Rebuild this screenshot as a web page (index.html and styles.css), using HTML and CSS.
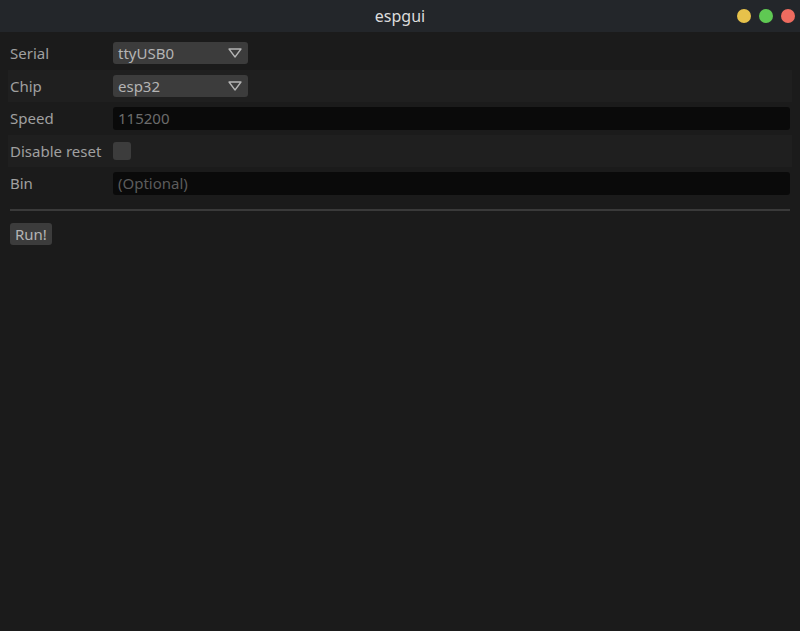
FILE: index.html
```html
<!DOCTYPE html>
<html>
<head>
<meta charset="utf-8">
<link rel="stylesheet" href="styles.css">
</head>
<body>
<div class="window">
  <header class="titlebar">
    <span class="title">espgui</span>
    <div class="controls">
      <span class="dot dot-min"></span>
      <span class="dot dot-max"></span>
      <span class="dot dot-close"></span>
    </div>
  </header>
  <main class="content">
    <div class="form">
      <div class="row">
        <span class="label">Serial</span>
        <div class="combo"><span>ttyUSB0</span>
          <svg class="tri" width="14" height="10" viewBox="0 0 14 10"><path d="M1 1 L13 1 L7 9 Z" fill="none" stroke="#b4b4b4" stroke-width="1.3" stroke-linejoin="round"/></svg>
        </div>
      </div>
      <div class="row striped">
        <span class="label">Chip</span>
        <div class="combo"><span>esp32</span>
          <svg class="tri" width="14" height="10" viewBox="0 0 14 10"><path d="M1 1 L13 1 L7 9 Z" fill="none" stroke="#b4b4b4" stroke-width="1.3" stroke-linejoin="round"/></svg>
        </div>
      </div>
      <div class="row">
        <span class="label">Speed</span>
        <div class="input">115200</div>
      </div>
      <div class="row striped">
        <span class="label">Disable reset</span>
        <span class="checkbox"></span>
      </div>
      <div class="row">
        <span class="label">Bin</span>
        <div class="input placeholder">(Optional)</div>
      </div>
    </div>
    <hr class="sep">
    <button class="btn">Run!</button>
  </main>
</div>
</body>
</html>
```
FILE: styles.css
```css
html, body {
  margin: 0;
  padding: 0;
  background: #1b1b1b;
  font-family: "Noto Sans", "Open Sans", sans-serif;
}
.window {
  width: 800px;
  height: 631px;
  display: flex;
  flex-direction: column;
  background: #1b1b1b;
}
.titlebar {
  height: 32px;
  flex: none;
  background: #23262a;
  display: flex;
  align-items: center;
  justify-content: center;
  position: relative;
}
.title {
  color: #dcdcdc;
  font-size: 16px;
}
.controls {
  position: absolute;
  right: 5px;
  top: 9px;
  display: flex;
  gap: 8px;
}
.dot {
  width: 14px;
  height: 14px;
  border-radius: 50%;
}
.dot-min { background: #e7c24b; }
.dot-max { background: #5fc953; }
.dot-close { background: #ee6b5f; }
.content {
  padding: 5px 8px 0;
  display: flex;
  flex-direction: column;
  align-items: flex-start;
}
.form {
  align-self: stretch;
  display: flex;
  flex-direction: column;
}
.row {
  height: 32.5px;
  display: grid;
  grid-template-columns: 103px 1fr;
  align-items: center;
  padding: 0 2px;
}
.row.striped {
  background: #1f1f1f;
}
.label {
  color: #a0a0a0;
  font-size: 15px;
}
.combo {
  width: 135px;
  height: 22px;
  box-sizing: border-box;
  background: #3c3c3c;
  border-radius: 3px;
  display: flex;
  align-items: center;
  justify-content: space-between;
  padding: 0 6px 0 5px;
  color: #b4b4b4;
  font-size: 15px;
}
.tri {
  display: block;
}
.input {
  height: 23px;
  box-sizing: border-box;
  background: #0a0a0a;
  border-radius: 3px;
  display: flex;
  align-items: center;
  padding: 0 5px;
  color: #6c6c6c;
  font-size: 15px;
}
.input.placeholder {
  color: #5c5c5c;
}
.checkbox {
  width: 18px;
  height: 18px;
  background: #3c3c3c;
  border-radius: 3px;
}
.sep {
  align-self: stretch;
  margin: 9px 2px 0;
  border: none;
  height: 2px;
  background: #3a3a3a;
}
.btn {
  margin: 12px 2px 0;
  height: 22px;
  padding: 0 5px;
  border: none;
  border-radius: 3px;
  background: #3c3c3c;
  color: #b4b4b4;
  font-family: inherit;
  font-size: 15px;
  line-height: 22px;
}
```
